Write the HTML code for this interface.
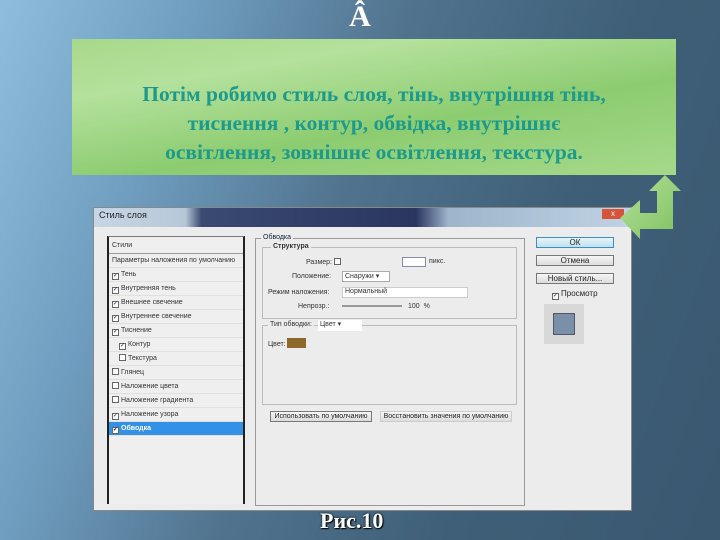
<!DOCTYPE html>
<html><head><meta charset="utf-8"><style>
*{margin:0;padding:0;box-sizing:border-box}
body{width:720px;height:540px;overflow:hidden;position:relative;font-family:"Liberation Sans",sans-serif;
background:linear-gradient(110deg,#8fbddd 0%,#6f9dbf 22%,#51738e 45%,#3f5f78 70%,#3a5870 100%);}
.a{position:absolute}
.green{left:72px;top:39px;width:604px;height:136px;background:linear-gradient(170deg,#a9d88a 0%,#b4e19c 25%,#8ccc70 60%,#a6d98a 100%);}
.gtext{left:72px;top:80px;width:604px;text-align:center;font-family:"Liberation Serif","DejaVu Serif",serif;font-weight:bold;font-size:21.5px;line-height:29px;color:#1d9a8c;}
.top{left:0;width:720px;top:0px;text-align:center;font-family:"Liberation Serif",serif;font-weight:bold;font-size:30px;color:#fff;}
.dlg{left:93px;top:207px;width:539px;height:304px;background:#ececec;border:1px solid #888;}
.tb{left:0;top:0;width:537px;height:19px;background:linear-gradient(90deg,#c7d6e4,#b6c8d8 17%,#3a4a70 20%,#2a3660 60%,#9db5cb 66%,#c0d3e3);font-size:9px;color:#222;padding:2px 5px}
.lp{left:13px;top:28px;width:138px;height:268px;background:#efefef;border-left:2px solid #222;border-right:2px solid #222;border-top:1px solid #777;font-size:7px;color:#333}
.lp div{height:14px;line-height:14px;padding-left:3px;border-bottom:1px solid #e0e0e0}
.cb{display:inline-block;width:7px;height:7px;border:1px solid #666;margin-right:2px;vertical-align:-1px;background:#fff;font-size:6px;line-height:5px;text-align:center;color:#225}
.mp{left:161px;top:30px;width:270px;height:268px;border:1px solid #999}
.sect{border:1px solid #bbb}
.btn{width:78px;height:11px;border:1px solid #777;background:linear-gradient(#f6f6f6,#dcdcdc);font-size:8px;text-align:center;line-height:9px;color:#222}
.t7{font-size:7px;color:#333}
.cap{left:320px;top:508px;font-family:"Liberation Serif",serif;font-weight:bold;font-size:22px;color:#fff;text-shadow:0 0 2px #000,1px 1px 1px #000}
</style></head><body>
<div class="a top">Â</div>
<div class="a green"></div>
<div class="a gtext">Потім робимо стиль слоя, тінь, внутрішня тінь,<br>тиснення , контур, обвідка, внутрішнє<br>освітлення, зовнішнє освітлення, текстура.</div>

<div class="a dlg">
 <div class="a tb">Стиль слоя</div>
 <div class="a" style="left:508px;top:1px;width:22px;height:10px;background:#d6543a;color:#fff;font-size:8px;text-align:center">x</div>
 <div class="a lp">
  <div style="height:17px;line-height:17px;border-bottom:1px solid #999">Стили</div>
  <div>Параметры наложения по умолчанию</div>
  <div><span class="cb">✓</span>Тень</div>
  <div><span class="cb">✓</span>Внутренняя тень</div>
  <div><span class="cb">✓</span>Внешнее свечение</div>
  <div><span class="cb">✓</span>Внутреннее свечение</div>
  <div><span class="cb">✓</span>Тиснение</div>
  <div style="padding-left:10px"><span class="cb">✓</span>Контур</div>
  <div style="padding-left:10px"><span class="cb"></span>Текстура</div>
  <div><span class="cb"></span>Глянец</div>
  <div><span class="cb"></span>Наложение цвета</div>
  <div><span class="cb"></span>Наложение градиента</div>
  <div><span class="cb">✓</span>Наложение узора</div>
  <div style="background:#3391e6;color:#fff;font-weight:bold"><span class="cb">✓</span>Обводка</div>
 </div>
 <div class="a mp">
  <div class="a t7" style="left:5px;top:-5px;background:#ececec;padding:0 2px;color:#123">Обводка</div>
  <div class="a sect" style="left:6px;top:8px;width:255px;height:72px"></div>
  <div class="a t7" style="left:15px;top:4px;background:#ececec;padding:0 2px;font-weight:bold">Структура</div>
  <div class="a t7" style="left:50px;top:19px">Размер: <span class="cb"></span></div>
  <div class="a" style="left:146px;top:18px;width:24px;height:10px;background:#fff;border:1px solid #88a"></div>
  <div class="a t7" style="left:173px;top:19px">пикс.</div>
  <div class="a t7" style="left:36px;top:34px">Положение:</div>
  <div class="a t7" style="left:86px;top:32px;width:48px;height:11px;background:#fff;border:1px solid #aaa;padding-left:2px">Снаружи ▾</div>
  <div class="a t7" style="left:12px;top:50px">Режим наложения:</div>
  <div class="a t7" style="left:86px;top:48px;width:126px;height:11px;background:#fff;border:1px solid #ccc;padding-left:2px">Нормальный</div>
  <div class="a t7" style="left:42px;top:64px">Непрозр.:</div>
  <div class="a" style="left:86px;top:66px;width:60px;height:2px;background:#999"></div>
  <div class="a t7" style="left:152px;top:64px">100 &nbsp;%</div>
  <div class="a sect" style="left:6px;top:86px;width:255px;height:80px"></div>
  <div class="a t7" style="left:12px;top:82px;background:#ececec;padding:0 2px">Тип обводки:</div>
  <div class="a t7" style="left:62px;top:81px;width:44px;height:11px;background:#fff;padding-left:2px">Цвет ▾</div>
  <div class="a t7" style="left:12px;top:102px">Цвет:</div>
  <div class="a" style="left:31px;top:99px;width:19px;height:10px;background:#8d6a2b"></div>
  <div class="a btn" style="left:14px;top:172px;width:102px;font-size:7px">Использовать по умолчанию</div>
  <div class="a btn" style="left:124px;top:172px;width:132px;font-size:7px;border-color:#ccc">Восстановить значения по умолчанию</div>
 </div>
 <div class="a btn" style="left:442px;top:29px;background:linear-gradient(#e8f4fa,#bfe0f0);border-color:#3b8fc0">ОК</div>
 <div class="a btn" style="left:442px;top:47px">Отмена</div>
 <div class="a btn" style="left:442px;top:65px">Новый стиль...</div>
 <div class="a" style="left:458px;top:81px;font-size:8px;color:#222"><span class="cb">✓</span>Просмотр</div>
 <div class="a" style="left:450px;top:96px;width:40px;height:40px;background:#d8d8d8"><div style="margin:9px 0 0 9px;width:22px;height:22px;background:#7890a8;border:1px solid #556"></div></div>
</div>

<svg class="a" style="left:600px;top:170px" width="90" height="75">
 <defs><linearGradient id="g" x1="0" y1="0" x2="1" y2="1"><stop offset="0" stop-color="#b5e29a"/><stop offset="1" stop-color="#7fc060"/></linearGradient></defs>
 <path d="M65 5 L81 21 L73 21 L73 59 L40 59 L40 69 L20 48 L40 30 L40 43 L57 43 L57 21 L49 21 Z" fill="url(#g)"/>
</svg>
<div class="a cap">Рис.10</div>
</body></html>
